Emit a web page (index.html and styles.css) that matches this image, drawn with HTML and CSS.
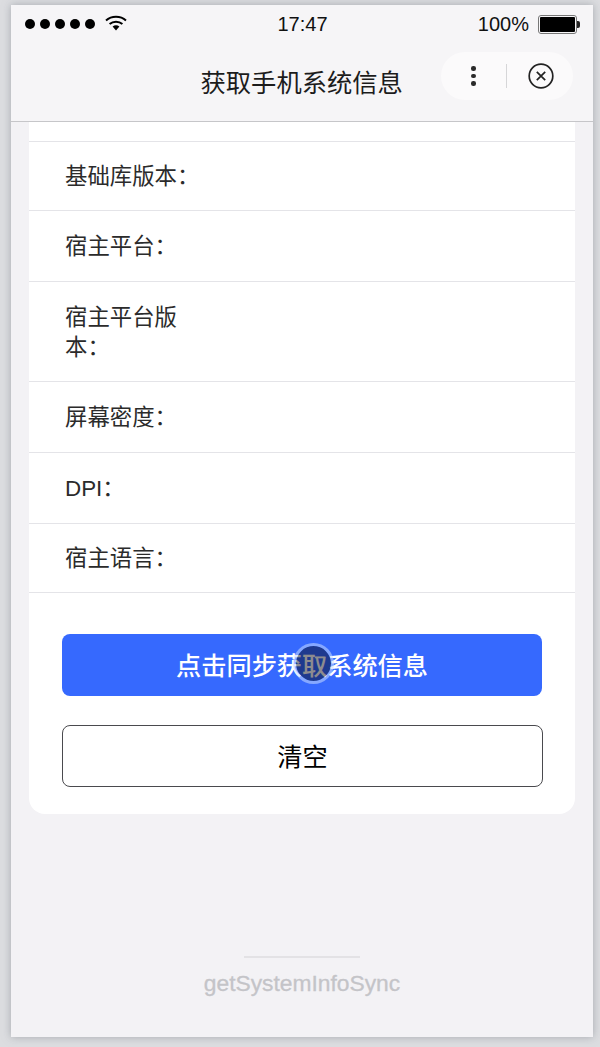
FILE: index.html
```html
<!DOCTYPE html>
<html lang="zh-CN">
<head>
    <meta charset="UTF-8">
    <meta name="viewport" content="width=device-width, initial-scale=1.0">
    <title>获取手机系统信息</title>
    <link rel="stylesheet" href="styles.css">
</head>
<body>
    <div class="screen">
        <div class="header">
            <div class="status-bar">
                <div class="signal">
                    <span class="dot"></span><span class="dot"></span><span class="dot"></span><span class="dot"></span><span class="dot"></span>
                    <svg class="wifi" width="22" height="16" viewBox="0 0 22 16">
                        <path d="M1 5.5C6.5 0.6 15.5 0.6 21 5.5" fill="none" stroke="#000" stroke-width="2"/>
                        <path d="M4.6 9C8.2 5.9 13.8 5.9 17.4 9" fill="none" stroke="#000" stroke-width="2"/>
                        <path d="M7.6 11.6L11 15.4L14.4 11.6C12.4 9.9 9.6 9.9 7.6 11.6Z" fill="#000"/>
                    </svg>
                </div>
                <div class="time">17:47</div>
                <div class="power">
                    <span class="percent">100%</span>
                    <span class="battery"><span class="battery-fill"></span></span>
                    <span class="battery-tip"></span>
                </div>
            </div>
            <div class="nav-bar">
                <h1 class="nav-title">获取手机系统信息</h1>
                <div class="capsule">
                    <div class="capsule-more"><span></span><span></span><span></span></div>
                    <div class="capsule-line"></div>
                    <svg class="capsule-close" width="26" height="26" viewBox="0 0 26 26">
                        <circle cx="13" cy="13" r="11.8" fill="none" stroke="#222" stroke-width="1.7"/>
                        <path d="M8.8 8.8L17.2 17.2M17.2 8.8L8.8 17.2" fill="none" stroke="#222" stroke-width="1.7"/>
                    </svg>
                </div>
            </div>
        </div>

        <div class="card">
            <div class="row row-cut"></div>
            <div class="row row-1"><div class="label">基础库版本：</div></div>
            <div class="row row-2"><div class="label">宿主平台：</div></div>
            <div class="row row-3"><div class="label">宿主平台版本：</div></div>
            <div class="row row-2"><div class="label">屏幕密度：</div></div>
            <div class="row row-2"><div class="label">DPI：</div></div>
            <div class="row row-1"><div class="label">宿主语言：</div></div>
            <div class="buttons">
                <button class="btn btn-primary">点击同步获取系统信息</button>
                <button class="btn btn-clear">清空</button>
            </div>
        </div>

        <div class="footer">
            <div class="footer-line"></div>
            <div class="footer-text">getSystemInfoSync</div>
        </div>

        <div class="touch"></div>
    </div>
</body>
</html>
```

FILE: styles.css
```css
* {
    box-sizing: border-box;
}
body {
    margin: 0;
    width: 600px;
    height: 1047px;
    overflow: hidden;
    padding: 5px 7px 10px 11px;
    background-color: #dcdde0;
    font-family: "Liberation Sans", "Noto Sans CJK SC", sans-serif;
    color: #222;
}
.screen {
    position: relative;
    height: 1032px;
    background-color: #f3f2f5;
    box-shadow: 0 0 8px rgba(120, 125, 135, 0.55);
    overflow: hidden;
}

/* status bar + nav */
.header {
    height: 117px;
    background-color: #f6f5f7;
    border-bottom: 1px solid #c6c6c9;
}
.status-bar {
    display: flex;
    align-items: center;
    justify-content: space-between;
    height: 38px;
    padding: 0 13px 0 14px;
}
.signal {
    display: flex;
    align-items: center;
    gap: 5px;
    width: 150px;
}
.dot {
    width: 10px;
    height: 10px;
    border-radius: 50%;
    background-color: #000;
}
.wifi {
    margin-left: 5px;
    margin-top: -2px;
}
.time {
    font-size: 20px;
    color: #111;
}
.power {
    display: flex;
    align-items: center;
    justify-content: flex-end;
    width: 150px;
}
.percent {
    font-size: 20px;
    color: #111;
    margin-right: 9px;
}
.battery {
    width: 39px;
    height: 19px;
    padding: 1px;
    border: 1px solid #777;
    border-radius: 3px;
}
.battery-fill {
    display: block;
    height: 100%;
    background-color: #000;
    border-radius: 1px;
}
.battery-tip {
    width: 3px;
    height: 7px;
    background-color: #222;
    border-radius: 0 2px 2px 0;
}
.nav-bar {
    position: relative;
    display: flex;
    align-items: center;
    height: 78px;
    padding: 0 20px 0 189.5px;
}
.nav-title {
    margin: -2px 0 0;
    font-size: 25.3px;
    font-weight: normal;
    color: #1c1c1c;
}
.capsule {
    position: absolute;
    top: 9px;
    right: 20px;
    display: flex;
    align-items: center;
    width: 132px;
    height: 48px;
    background-color: #fbfafb;
    border-radius: 24px;
}
.capsule-more {
    display: flex;
    flex-direction: column;
    gap: 3px;
    margin-left: 30px;
}
.capsule-more span {
    width: 4.5px;
    height: 4.5px;
    border-radius: 50%;
    background-color: #2a2a2a;
}
.capsule-line {
    width: 1px;
    height: 24px;
    margin-left: 30px;
    background-color: #d6d6d8;
}
.capsule-close {
    margin-left: 21px;
}

/* card */
.card {
    width: 546px;
    height: 692px;
    margin-left: 18px;
    background-color: #fff;
    border-radius: 0 0 16px 16px;
}
.row {
    display: flex;
    align-items: center;
    padding-left: 36px;
    padding-top: 2px;
    border-bottom: 1px solid #e4e4e8;
}
.row-cut {
    height: 20px;
}
.row-1 {
    height: 69px;
    padding-top: 1px;
}
.row-2 {
    height: 71px;
}
.row-3 {
    height: 100px;
}
.label {
    width: 140px;
    font-size: 22.4px;
    line-height: 30px;
    color: #2b2b2b;
}
.buttons {
    display: flex;
    flex-direction: column;
    gap: 29px;
    padding: 41px 32px 0 33px;
}
.btn {
    height: 62px;
    padding: 0 0 3px;
    border-radius: 8px;
    font-family: inherit;
    font-size: 25.2px;
}
.btn-primary {
    width: 480px;
    background-color: #3669fe;
    border: none;
    color: #fff;
    font-weight: 500;
}
.btn-clear {
    width: 100%;
    background-color: #fff;
    border: 1px solid #4a4a4e;
    color: #000;
}

/* footer */
.footer {
    display: flex;
    flex-direction: column;
    align-items: center;
    margin-top: 142px;
}
.footer-line {
    width: 116px;
    height: 2px;
    background-color: #e3e2e5;
    margin-left: -1px;
}
.footer-text {
    margin-top: 11px;
    font-size: 22.8px;
    line-height: 28px;
    color: #c4c4c8;
    -webkit-text-stroke: 0.3px #c4c4c8;
}

/* touch indicator from the recording */
.touch {
    position: absolute;
    left: 282px;
    top: 638px;
    width: 41px;
    height: 41px;
    border-radius: 50%;
    background-color: rgba(3, 0, 7, 0.45);
    border: 3px solid rgba(200, 220, 255, 0.55);
    background-clip: padding-box;
}
```
